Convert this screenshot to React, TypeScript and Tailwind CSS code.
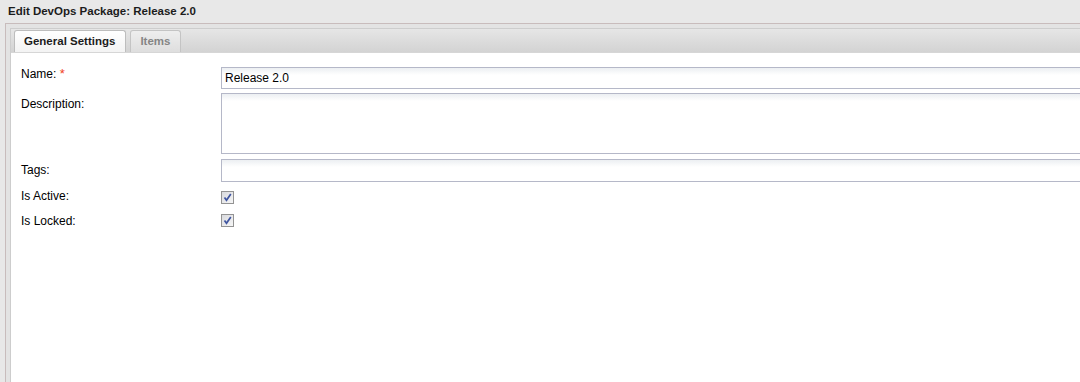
const Check = () => (
  <div className="w-[13px] h-[13px] border border-[#939393] bg-gradient-to-br from-[#d9dade] to-[#f6f6f6] flex items-center justify-center">
    <svg width="11" height="11" viewBox="0 0 11 11">
      <path d="M2.5 5.5 L4.5 8.3 L8.8 2" fill="none" stroke="#3f55a0" strokeWidth="1.7" />
    </svg>
  </div>
);

const fieldCls =
  "block shrink-0 w-[880px] border border-[#b5b8c8] bg-[linear-gradient(to_bottom,#eceff2,#ffffff_7px)] text-[12px] text-black px-[3px] outline-none";

const App = () => {
  return (
    <div className="w-[1080px] h-[382px] overflow-hidden bg-[#e8e8e8] font-['Liberation_Sans',Arial,sans-serif] text-black">
      {/* Header */}
      <div className="h-[23px] pl-[8px] flex items-center text-[11.5px] font-bold text-[#1c1c1c]">
        Edit DevOps Package: Release 2.0
      </div>

      {/* Window body */}
      <div className="ml-[5px] h-[359px] border-l border-t border-[#c8bcbc] bg-[#e3e3e3] pl-[4px] pt-[4px]">
        <div className="h-full border-l border-t border-[#cdcdcd] bg-white overflow-hidden">
          {/* Tabs */}
          <div className="h-[24px] flex items-end gap-[4px] pl-[3px] border-b border-[#d6d6d6] bg-gradient-to-b from-[#e6e6e6] to-[#d3d3d3]">
            <div className="h-[22px] pl-[9px] pr-[10px] flex items-center rounded-t-[3px] border border-b-0 border-[#bdbdbd] bg-gradient-to-b from-white to-[#f3f3f3] text-[11.5px] font-bold text-[#1c1c1c]">
              General Settings
            </div>
            <div className="h-[22px] pl-[9px] pr-[10px] flex items-center rounded-t-[3px] border border-b-0 border-[#c4c4c4] bg-gradient-to-b from-[#eeeeee] to-[#dedede] text-[11.5px] font-bold text-[#858585]">
              Items
            </div>
          </div>

          {/* Form */}
          <div className="pt-[14px] pl-[10px] text-[12px] leading-[14px]">
            <div className="flex">
              <div className="w-[200px] shrink-0">
                Name: <span className="text-[#f0401c] text-[13px] align-top">*</span>
              </div>
              <input className={`${fieldCls} h-[22px]`} defaultValue="Release 2.0" />
            </div>

            <div className="flex mt-[4px]">
              <div className="w-[200px] shrink-0 pt-[4px]">Description:</div>
              <textarea className={`${fieldCls} h-[61px] resize-none`} />
            </div>

            <div className="flex mt-[5px]">
              <div className="w-[200px] shrink-0 pt-[4px]">Tags:</div>
              <input className={`${fieldCls} h-[23px]`} />
            </div>

            <div className="flex mt-[7px]">
              <div className="w-[200px] shrink-0">Is Active:</div>
              <div className="pt-[2px]">
                <Check />
              </div>
            </div>

            <div className="flex mt-[9px]">
              <div className="w-[200px] shrink-0 pt-[1px]">Is Locked:</div>
              <div className="pt-[1px]">
                <Check />
              </div>
            </div>
          </div>
        </div>
      </div>
    </div>
  );
};

export default App;
